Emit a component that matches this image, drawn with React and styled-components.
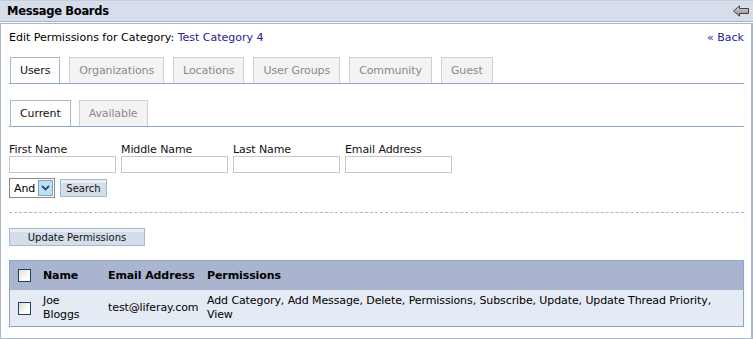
import React from 'react';
import styled, { createGlobalStyle } from 'styled-components';

const GlobalStyle = createGlobalStyle`
  body {
    margin: 0;
    background: #fff;
    font-family: "DejaVu Sans", Tahoma, sans-serif;
    font-size: 11px;
    letter-spacing: -0.1px;
    color: #000;
  }
`;

const Portlet = styled.div`
  width: 753px;
  height: 339px;
  box-sizing: border-box;
  display: flex;
  flex-direction: column;
`;

const TitleBar = styled.div`
  height: 20px;
  display: flex;
  align-items: center;
  justify-content: space-between;
  padding: 0 4px 0 7px;
  background: #d5deea;
  border-top: 1px solid #c4cdd8;
  border-bottom: 1px solid #a3b3c7;
`;

const TitleText = styled.h1`
  margin: 0;
  font-size: 11.5px;
  letter-spacing: -0.3px;
  font-weight: bold;
  color: #000;
`;

const Content = styled.div`
  flex: 1;
  margin-top: 1px;
  border: 1px solid #a9b9cd;
  border-right-width: 2px;
  padding: 6px 7px 0 8px;
  display: flex;
  flex-direction: column;
`;

const Heading = styled.div`
  display: flex;
  justify-content: space-between;
  height: 15px;
  line-height: 15px;
  letter-spacing: 0;
`;

const Link = styled.a`
  color: #1d2491;
  text-decoration: none;
`;

const TabBar = styled.div`
  display: flex;
  gap: ${(p) => p.gap || 9}px;
  margin-top: ${(p) => p.top}px;
  padding-left: 1px;
  border-bottom: 1px solid #8fa8c8;
`;

const Tab = styled.div`
  height: 25px;
  line-height: 25px;
  padding: 0 9px;
  border: 1px solid ${(p) => (p.active ? '#a5b8cf' : '#cfcfcf')};
  border-bottom: none;
  background: ${(p) => (p.active ? '#fff' : '#f3f3f3')};
  color: ${(p) => (p.active ? '#111' : '#8a8a8a')};
  margin-bottom: ${(p) => (p.active ? '-1px' : '0')};
`;

const Fields = styled.div`
  display: flex;
  gap: 5px;
  margin-top: 16px;
`;

const Field = styled.label`
  display: flex;
  flex-direction: column;
  gap: 0;
  color: #111;
`;

const Input = styled.div`
  width: 105px;
  height: 15px;
  border: 1px solid #c8c8c8;
  background: #fff;
`;

const SearchRow = styled.div`
  display: flex;
  align-items: center;
  gap: 5px;
  margin-top: 5px;
`;

const Select = styled.div`
  height: 18px;
  width: 40px;
  border: 1px solid #8a8a8a;
  display: flex;
  align-items: center;
  justify-content: space-between;
  padding-left: 4px;
`;

const SelectArrow = styled.span`
  width: 15px;
  height: 16px;
  margin-right: 1px;
  background: #bfe0f3;
  border: 1px solid #7ea5c4;
  box-sizing: border-box;
  display: flex;
  align-items: center;
  justify-content: center;
`;

const Button = styled.button`
  height: 18px;
  width: ${(p) => p.w}px;
  padding: 0;
  font-family: inherit;
  font-size: 10px;
  letter-spacing: 0;
  color: #111;
  border: 1px solid #a6b9d0;
  background: linear-gradient(#e9eef5 0 3px, #d4deea 3px);
  cursor: pointer;
`;

const Divider = styled.hr`
  margin: 14px 0 0;
  border: none;
  border-top: 1px dashed #a8b8cc;
`;

const ButtonRow = styled.div`
  margin-top: 15px;
`;

const Table = styled.table`
  margin-top: 14px;
  width: 735px;
  border-collapse: collapse;
  border: 1px solid #8ca5c8;
`;

const HeadRow = styled.tr`
  background: #aab4cf;
  height: 29px;
`;

const Th = styled.th`
  text-align: left;
  font-weight: bold;
  padding: 0;
  width: ${(p) => (p.w ? `${p.w}px` : 'auto')};
  color: #000;
`;

const BodyRow = styled.tr`
  background: #e5ebf4;
  height: 37px;
`;

const Td = styled.td`
  padding: 1px 0 0;
  padding-right: ${(p) => p.pr || 0}px;
  line-height: 14px;
  vertical-align: middle;
`;

const Check = styled.span`
  display: block;
  width: 11px;
  height: 11px;
  margin-left: 8px;
  border: 1px solid #1f3f63;
  background: linear-gradient(135deg, #dcdcd6, #ffffff 70%);
`;

const BackArrow = () => (
  <svg width="16" height="12" viewBox="0 0 16 12">
    <defs>
      <linearGradient id="ag" x1="0" y1="0" x2="0" y2="1">
        <stop offset="0" stopColor="#d8d8d8" />
        <stop offset="1" stopColor="#8c8c8c" />
      </linearGradient>
    </defs>
    <polygon points="0.5,6 6.5,0.8 6.5,3.5 15.5,3.5 15.5,8.5 6.5,8.5 6.5,11.2" fill="url(#ag)" stroke="#444" strokeWidth="1" strokeLinejoin="round" />
  </svg>
);

const Chevron = () => (
  <svg width="9" height="6" viewBox="0 0 9 6">
    <polyline points="1,1 4.5,4.5 8,1" fill="none" stroke="#2b4a6a" strokeWidth="1.8" />
  </svg>
);

const tabs = ['Users', 'Organizations', 'Locations', 'User Groups', 'Community', 'Guest'];
const fields = ['First Name', 'Middle Name', 'Last Name', 'Email Address'];

export default function App() {
  return (
    <>
      <GlobalStyle />
      <Portlet>
        <TitleBar>
          <TitleText>Message Boards</TitleText>
          <BackArrow />
        </TitleBar>
        <Content>
          <Heading>
            <span>
              Edit Permissions for Category: <Link href="#">Test Category 4</Link>
            </span>
            <Link href="#">« Back</Link>
          </Heading>

          <TabBar top={12}>
            {tabs.map((t, i) => (
              <Tab key={t} active={i === 0}>{t}</Tab>
            ))}
          </TabBar>

          <TabBar top={16} gap={8}>
            <Tab active>Current</Tab>
            <Tab>Available</Tab>
          </TabBar>

          <Fields>
            {fields.map((f) => (
              <Field key={f}>
                {f}
                <Input />
              </Field>
            ))}
          </Fields>

          <SearchRow>
            <Select>
              And
              <SelectArrow><Chevron /></SelectArrow>
            </Select>
            <Button w={47}>Search</Button>
          </SearchRow>

          <Divider />

          <ButtonRow>
            <Button w={136}>Update Permissions</Button>
          </ButtonRow>

          <Table>
            <thead>
              <HeadRow>
                <Th w={33}><Check /></Th>
                <Th w={65}>Name</Th>
                <Th w={99}>Email Address</Th>
                <Th>Permissions</Th>
              </HeadRow>
            </thead>
            <tbody>
              <BodyRow>
                <Td><Check /></Td>
                <Td>Joe<br />Bloggs</Td>
                <Td>test@liferay.com</Td>
                <Td pr={20}>Add Category, Add Message, Delete, Permissions, Subscribe, Update, Update Thread Priority, View</Td>
              </BodyRow>
            </tbody>
          </Table>
        </Content>
      </Portlet>
    </>
  );
}
